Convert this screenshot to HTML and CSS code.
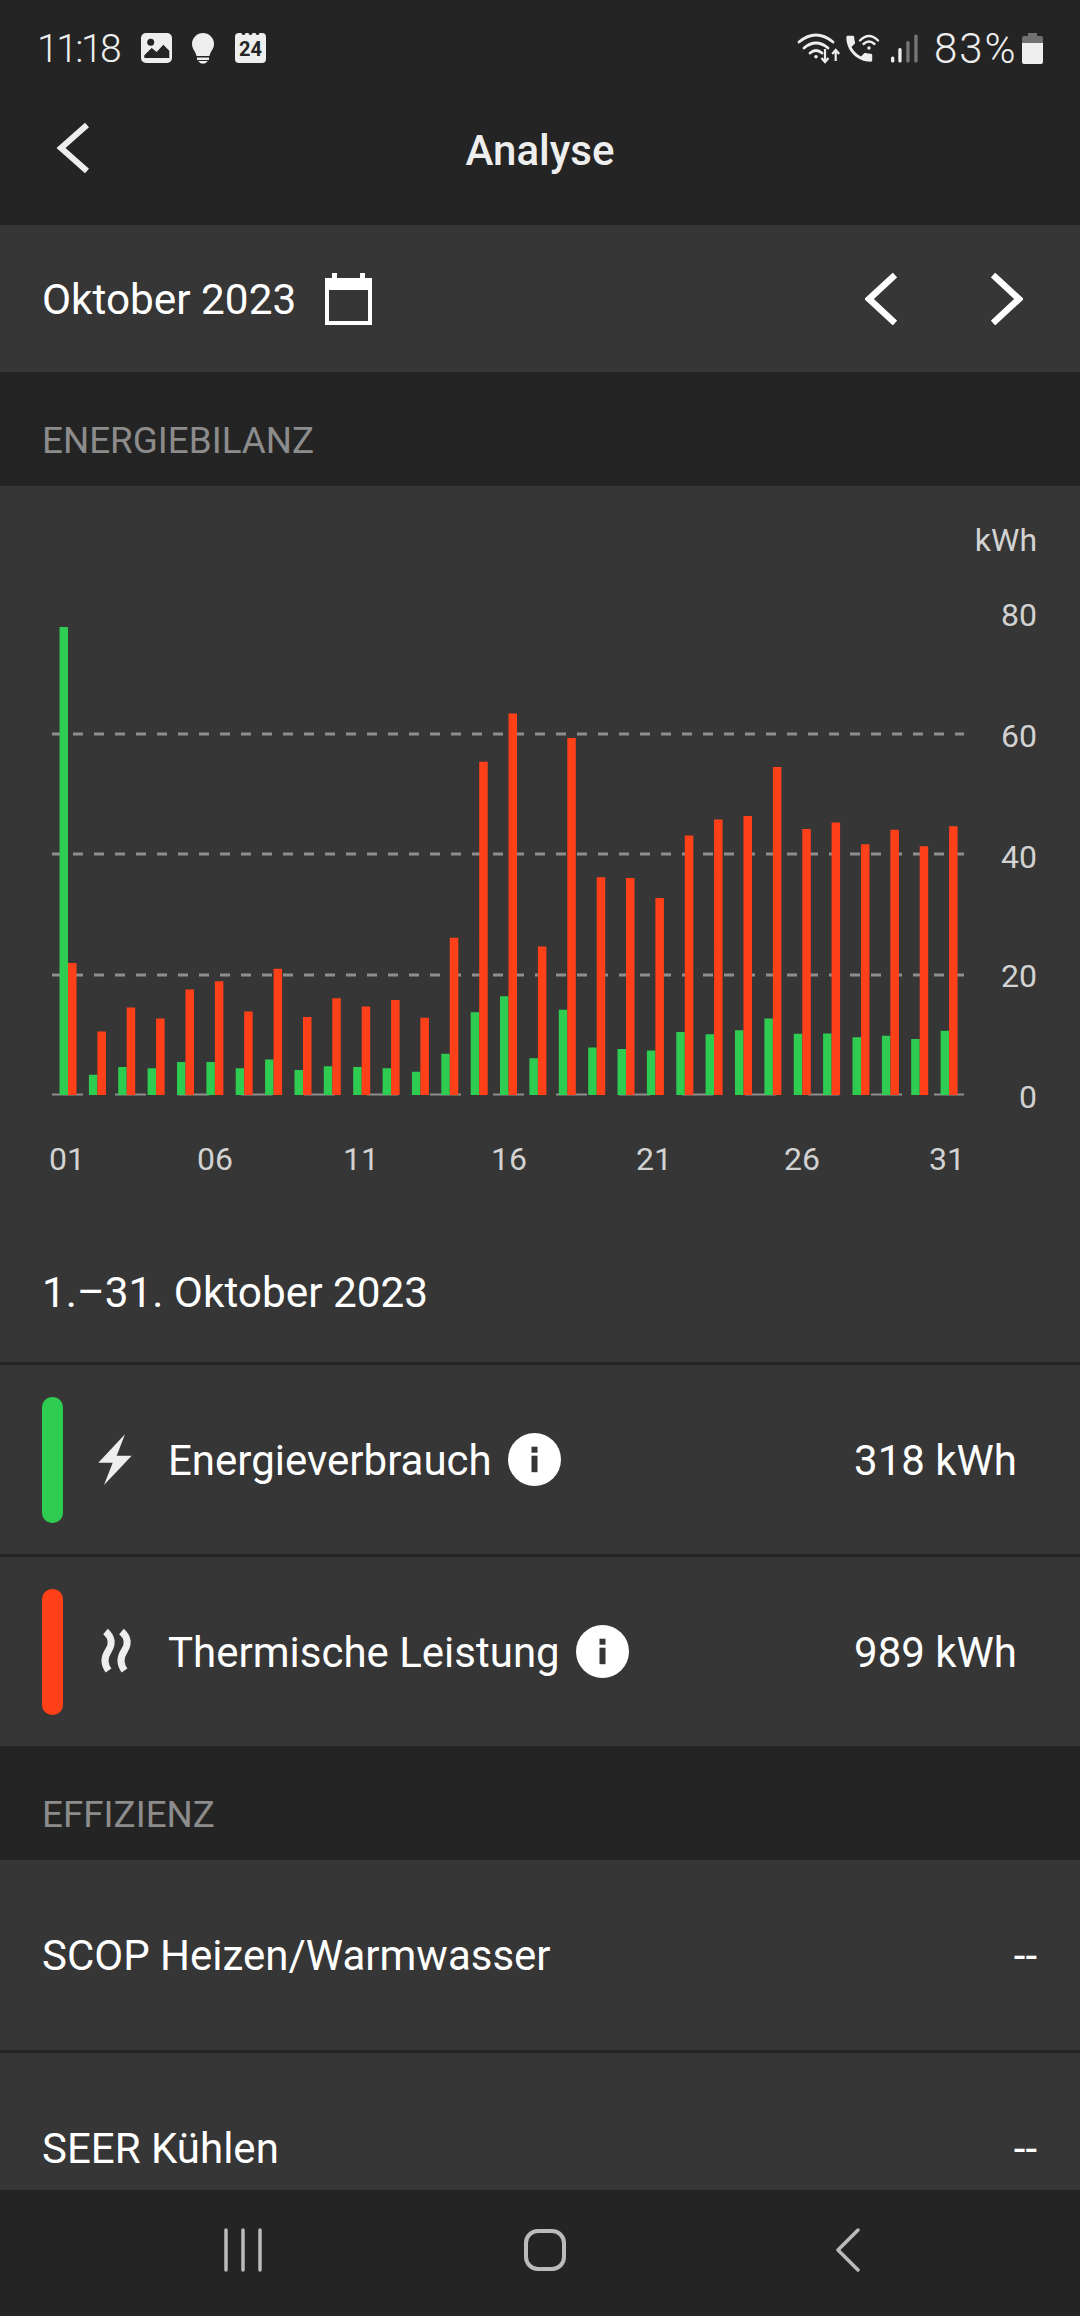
FILE: index.html
```html
<!doctype html>
<html lang="de">
<head>
	<meta charset="UTF-8">
	<meta name="viewport" content="width=device-width">
	<title>Analyse</title>
	<link rel="stylesheet" href="styles.css">
</head>
<body>

<svg class="defs" width="0" height="0">
	<symbol id="info" viewBox="0 0 53 53">
		<circle cx="26.5" cy="26.5" r="26.5" fill="#fff"/>
		<rect x="23.5" y="13.7" width="6" height="6" fill="#363636"/>
		<rect x="23.5" y="22.7" width="6" height="16.5" fill="#363636"/>
	</symbol>
</svg>

<header class="top">
	<div class="status">
		<div class="status-side">
			<span class="clock">11:18</span>
			<svg class="status-apps" width="145" height="45" viewBox="0 0 145 45">
				<rect x="11" y="8" width="31" height="30" rx="5" fill="#eee"/>
				<circle cx="20.7" cy="17.3" r="3.5" fill="#242424"/>
				<path d="M14.3 30.3 21.7 23l5 4 6.6-7.3 6 6v7.3H14.3z" fill="#242424"/>
				<path d="M73 8a11 11 0 0 1 11 11c0 5-3.500 7-4.500 12h-13c-1-5-4.500-7-4.500-12a11 11 0 0 1 11-11z" fill="#eee"/>
				<rect x="67" y="32.500" width="12" height="2.500" fill="#eee"/>
				<path d="M68 36h10l-3 2.500h-4z" fill="#eee"/>
				<rect x="105" y="8" width="31" height="30" rx="4" fill="#eee"/>
				<circle cx="113.500" cy="8" r="2" fill="#242424"/>
				<circle cx="120.500" cy="8" r="2" fill="#242424"/>
				<circle cx="127.500" cy="8" r="2" fill="#242424"/>
				<text class="cal-day" x="120.500" y="31" text-anchor="middle">24</text>
			</svg>
		</div>
		<div class="status-side">
			<svg class="status-net" width="130" height="45" viewBox="0 0 130 45">
				<g fill="none" stroke="#eee" stroke-width="2.800" stroke-linecap="round">
					<path d="M9 17Q26 3 43 17"/>
					<path d="M14 23Q26 13 38 23"/>
					<path d="M20 28Q26 23 32 28"/>
				</g>
				<circle cx="26" cy="31.700" r="1.800" fill="#eee"/>
				<path d="M35 24v13M31.500 33l3.500 4 3.500-4M45.700 36V26M42.200 29l3.500-4 3.500 4" fill="none" stroke="#eee" stroke-width="2.200"/>
				<path transform="translate(52 6.500) scale(1.440)" d="M6.620 10.790c1.440 2.830 3.760 5.140 6.590 6.590l2.200-2.200c.270-.270.670-.360 1.020-.240 1.120.370 2.330.570 3.570.570.550 0 1 .450 1 1V20c0 .550-.450 1-1 1-9.390 0-17-7.610-17-17 0-.550.450-1 1-1h3.500c.550 0 1 .450 1 1 0 1.250.200 2.450.570 3.570.110.350.030.740-.250 1.020l-2.200 2.200z" fill="#eee"/>
				<g fill="none" stroke="#eee" stroke-width="2.400" stroke-linecap="round">
					<path d="M70 15.500Q79 6.500 88 15.500"/>
					<path d="M73.500 19Q79 14 84.500 19"/>
				</g>
				<circle cx="79" cy="23" r="1.700" fill="#eee"/>
				<rect x="101" y="31.500" width="3.300" height="6" rx="1.500" fill="#eee"/>
				<rect x="108.300" y="23" width="3.300" height="14.500" rx="1.500" fill="#eee"/>
				<rect x="116.300" y="16" width="3.300" height="21.500" rx="1.500" fill="#777"/>
				<rect x="124.300" y="9.500" width="3.300" height="28" rx="1.500" fill="#777"/>
			</svg>
			<span class="percent">83%</span>
			<svg class="battery" width="21" height="31" viewBox="0 0 21 31">
				<path d="M6 0h9v3h4a2 2 0 0 1 2 2v5H0V5a2 2 0 0 1 2-2h4z" fill="#707070"/>
				<path d="M0 10h21v19a2 2 0 0 1-2 2H2a2 2 0 0 1-2-2z" fill="#eee"/>
			</svg>
		</div>
	</div>
	<div class="appbar">
		<svg class="back" width="40" height="60" viewBox="0 0 40 60">
			<path d="M34 7 8 30l26 23" fill="none" stroke="#eee" stroke-width="6"/>
		</svg>
		<h1>Analyse</h1>
	</div>
</header>

<main class="content">
	<div class="datebar">
		<div class="date-pick">
			<span>Oktober 2023</span>
			<svg width="47" height="52" viewBox="0 0 47 52">
				<path d="M7 0h5v5h23V0h5v5h7v47H0V5h7z" fill="#fff"/>
				<rect x="4" y="17" width="39" height="31" fill="#363636"/>
			</svg>
		</div>
		<div class="date-nav">
			<svg width="32" height="52" viewBox="0 0 32 52">
				<path d="M30 2 4 26l26 24" fill="none" stroke="#fff" stroke-width="6.500"/>
			</svg>
			<svg width="32" height="52" viewBox="0 0 32 52">
				<path d="M2 2l26 24L2 50" fill="none" stroke="#fff" stroke-width="6.500"/>
			</svg>
		</div>
	</div>

	<h2 class="section-head">ENERGIEBILANZ</h2>

	<section class="panel">
		<svg class="chart" width="1080" height="720" viewBox="0 0 1080 720">
			<text class="axis" x="1037" y="65" text-anchor="end">kWh</text>
			<text class="axis" x="1037" y="140" text-anchor="end">80</text>
			<text class="axis" x="1037" y="261" text-anchor="end">60</text>
			<text class="axis" x="1037" y="382" text-anchor="end">40</text>
			<text class="axis" x="1037" y="501" text-anchor="end">20</text>
			<text class="axis" x="1037" y="622" text-anchor="end">0</text>

			<path class="grid" d="M52 248H964M52 368H964M52 489H964"/>
			<path class="baseline" d="M52 608.500H964"/>

			<path class="bar-use" d="M59.500 609V141h8.500V609zM88.900 609V588.700h8.500V609zM118.200 609V581.100h8.500V609zM147.600 609V582.200h8.500V609zM177 609V576.100h8.500V609zM206.400 609V576.100h8.500V609zM235.700 609V582.200h8.500V609zM265.100 609V573.400h8.500V609zM294.500 609V584.100h8.500V609zM323.800 609V580.300h8.500V609zM353.200 609V581.100h8.500V609zM382.600 609V582.200h8.500V609zM411.900 609V585.700h8.500V609zM441.300 609V567.700h8.500V609zM470.700 609V526.300h8.500V609zM500 609V510.300h8.500V609zM529.400 609V572.300h8.500V609zM558.800 609V523.700h8.500V609zM588.200 609V561.500h8.500V609zM617.500 609V563.100h8.500V609zM646.900 609V564.600h8.500V609zM676.300 609V545.900h8.500V609zM705.600 609V548.200h8.500V609zM735 609V544.300h8.500V609zM764.400 609V532.500h8.500V609zM793.800 609V547.800h8.500V609zM823.100 609V547.400h8.500V609zM852.500 609V551.200h8.500V609zM881.900 609V549.700h8.500V609zM911.200 609V553.100h8.500V609zM940.600 609V544.700h8.500V609z"/>
			<path class="bar-heat" d="M68 609V477h8.500V609zM97.400 609V545.500h8.500V609zM126.700 609V521.400h8.500V609zM156.100 609V532.500h8.500V609zM185.500 609V503.400h8.500V609zM214.900 609V495.300h8.500V609zM244.200 609V525.600h8.500V609zM273.600 609V482.700h8.500V609zM303 609V530.900h8.500V609zM332.300 609V512.200h8.500V609zM361.700 609V520.600h8.500V609zM391.100 609V514.100h8.500V609zM420.400 609V531.700h8.500V609zM449.800 609V451.700h8.500V609zM479.200 609V275.700h8.500V609zM508.500 609V227.400h8.500V609zM537.900 609V460.500h8.500V609zM567.300 609V251.900h8.500V609zM596.700 609V391.200h8.500V609zM626 609V392h8.500V609zM655.400 609V411.900h8.500V609zM684.800 609V349.500h8.500V609zM714.100 609V333.500h8.500V609zM743.500 609V330h8.500V609zM772.900 609V281h8.500V609zM802.300 609V343h8.500V609zM831.600 609V336.500h8.500V609zM861 609V358.300h8.500V609zM890.400 609V343.800h8.500V609zM919.700 609V360.200h8.500V609zM949.100 609V340.300h8.500V609z"/>

			<text class="axis" x="67" y="684" text-anchor="middle">01</text>
			<text class="axis" x="215" y="684" text-anchor="middle">06</text>
			<text class="axis" x="361" y="684" text-anchor="middle">11</text>
			<text class="axis" x="509" y="684" text-anchor="middle">16</text>
			<text class="axis" x="654" y="684" text-anchor="middle">21</text>
			<text class="axis" x="802" y="684" text-anchor="middle">26</text>
			<text class="axis" x="947" y="684" text-anchor="middle">31</text>
		</svg>
		<p class="period">1.–31. Oktober 2023</p>
	</section>

	<div class="row legend">
		<span class="swatch swatch-use"></span>
		<svg class="kind" width="50" height="70" viewBox="0 0 50 70">
			<path d="M35 9.300 8.300 37.700h14.400L14 60l27.700-29.300h-15z" fill="#eee"/>
		</svg>
		<span class="label">Energieverbrauch</span>
		<svg class="info" width="53" height="53"><use href="#info"/></svg>
		<span class="value">318 kWh</span>
	</div>
	<div class="row legend">
		<span class="swatch swatch-heat"></span>
		<svg class="kind" width="50" height="70" viewBox="0 0 50 70">
			<path d="M15.500 14.500C22.500 20.500 22.500 27.500 18.500 33.500 14.500 39.500 13.500 46.500 18.500 53.500M31.500 14.500C38.500 20.500 38.500 27.500 34.500 33.500 30.500 39.500 29.500 46.500 34.500 53.500" fill="none" stroke="#eee" stroke-width="7"/>
		</svg>
		<span class="label">Thermische Leistung</span>
		<svg class="info" width="53" height="53"><use href="#info"/></svg>
		<span class="value">989 kWh</span>
	</div>

	<h2 class="section-head">EFFIZIENZ</h2>

	<div class="row plain">
		<span class="label">SCOP Heizen/Warmwasser</span>
		<span class="value">--</span>
	</div>
	<div class="row plain">
		<span class="label">SEER Kühlen</span>
		<span class="value">--</span>
	</div>
</main>

<nav class="sysnav">
	<svg width="40" height="44" viewBox="0 0 40 44">
		<path d="M3 2v40M20 2v40M37 2v40" fill="none" stroke="#bbb" stroke-width="3.500" stroke-linecap="round"/>
	</svg>
	<svg width="44" height="44" viewBox="0 0 44 44">
		<rect x="3" y="3" width="38" height="38" rx="12" fill="none" stroke="#bbb" stroke-width="4"/>
	</svg>
	<svg width="28" height="44" viewBox="0 0 28 44">
		<path d="M24 2 4 22l20 20" fill="none" stroke="#bbb" stroke-width="3.500" stroke-linecap="round" stroke-linejoin="round"/>
	</svg>
</nav>

</body>
</html>
```

FILE: styles.css
```css
html, body {
	margin: 0;
	height: 100%;
}
body {
	display: flex;
	flex-direction: column;
	height: 2316px;
	overflow: hidden;
	background: #242424;
	color: #fff;
	font-family: Roboto, "Noto Sans", sans-serif;
}
h1, h2, p {
	margin: 0;
	font-weight: normal;
}
svg {
	display: block;
	flex: none;
}
.defs {
	position: absolute;
}

/* status bar + title */
.top {
	height: 225px;
	flex: none;
}
.status {
	display: flex;
	justify-content: space-between;
	height: 75px;
	padding: 25px 37px 0 37px;
	box-sizing: border-box;
	color: #eee;
}
.status-side {
	display: flex;
	align-items: flex-start;
}
.clock, .percent {
	font-weight: 300;
	line-height: 48px;
}
.clock {
	width: 93px;
	font-size: 39px;
	letter-spacing: -2.5px;
}
.percent {
	width: 82px;
	margin: 0 6px 0 14px;
	font-size: 42px;
	letter-spacing: 2px;
}
.cal-day {
	font-size: 20px;
	font-weight: 700;
	fill: #242424;
}
.battery {
	margin-top: 8px;
}
.appbar {
	position: relative;
	display: flex;
	align-items: center;
	justify-content: center;
	height: 150px;
}
.appbar h1 {
	font-size: 42px;
	font-weight: 500;
	color: #eee;
}
.back {
	position: absolute;
	left: 53px;
	top: 43px;
}

/* scrolling part */
.content {
	flex: 1;
	min-height: 0;
	overflow: hidden;
	background: #242424;
}
.datebar {
	display: flex;
	align-items: center;
	justify-content: space-between;
	height: 147px;
	padding: 0 57px 0 42px;
	background: #363636;
	font-size: 42.3px;
}
.date-pick {
	display: flex;
	align-items: center;
	gap: 29px;
}
.date-pick span {
	padding-top: 2px;
}
.date-nav {
	display: flex;
	gap: 94px;
}
.section-head {
	display: flex;
	align-items: flex-end;
	height: 114px;
	padding: 0 42px 22px;
	box-sizing: border-box;
	font-size: 36.8px;
	line-height: 46px;
	color: #8c8c8c;
}
.panel {
	background: #363636;
	margin-bottom: 3px;
}
.axis {
	font-size: 32px;
	fill: #d2d2d2;
}
.grid {
	fill: none;
	stroke: #8e8e8e;
	stroke-width: 3;
	stroke-dasharray: 10 11;
}
.baseline {
	fill: none;
	stroke: #8e8e8e;
	stroke-width: 2;
	stroke-dasharray: 31 32;
}
.bar-use {
	fill: #2ecc50;
}
.bar-heat {
	fill: #ff4019;
}
.period {
	padding: 62px 42px 44px;
	font-size: 42.3px;
	line-height: 50px;
}

.row {
	display: flex;
	align-items: center;
	height: 189px;
	background: #363636;
	font-size: 42px;
}
.row + .row {
	margin-top: 3px;
}
.legend {
	padding: 0 63px 0 42px;
}
.legend .label, .legend .value {
	padding-top: 2px;
}
.swatch {
	width: 21px;
	height: 126px;
	border-radius: 10px;
}
.swatch-use {
	background: #2ecc50;
}
.swatch-heat {
	background: #ff4019;
}
.kind {
	margin: 0 28px 0 27px;
}
.info {
	margin-left: 16px;
}
.value {
	margin-left: auto;
}
.plain {
	height: 190px;
	padding: 0 43px 0 42px;
}

.sysnav {
	flex: none;
	position: relative;
	height: 126px;
	background: #242424;
}
.sysnav svg {
	position: absolute;
	top: 38px;
}
.sysnav svg:nth-child(1) {
	left: 223px;
}
.sysnav svg:nth-child(2) {
	left: 523px;
}
.sysnav svg:nth-child(3) {
	left: 834px;
}
```
